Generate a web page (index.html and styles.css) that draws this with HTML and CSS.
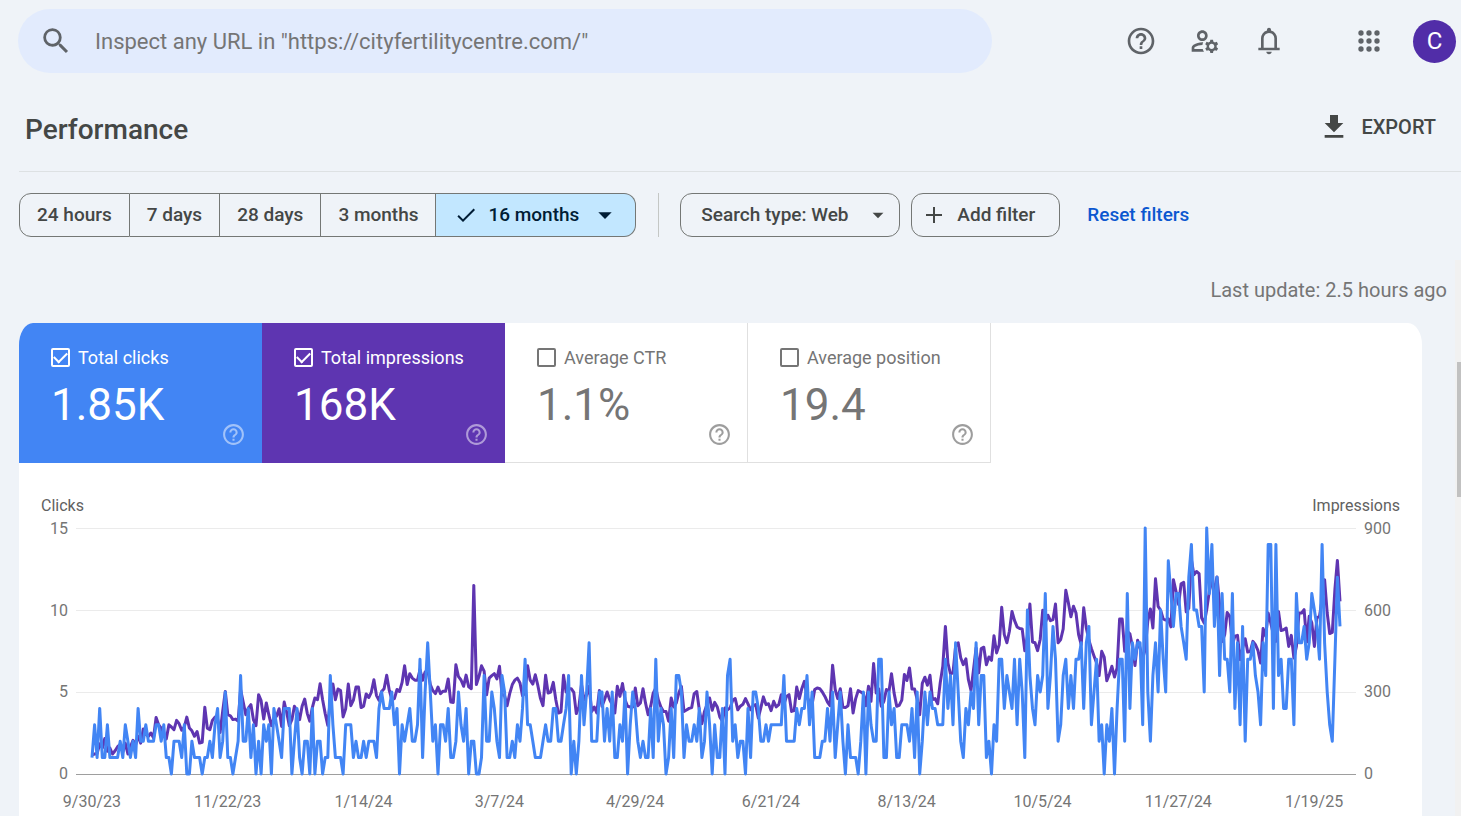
FILE: index.html
```html
<!DOCTYPE html>
<html lang="en">
<head>
<meta charset="utf-8">
<meta name="viewport" content="width=device-width, initial-scale=1">
<title>Performance</title>
<link rel="stylesheet" href="styles.css">
</head>
<body>
<svg class="sprite" aria-hidden="true">
  <symbol id="help" viewBox="0 0 24 24"><path d="M11 18h2v-2h-2v2zm1-16C6.48 2 2 6.48 2 12s4.48 10 10 10 10-4.48 10-10S17.52 2 12 2zm0 18c-4.41 0-8-3.59-8-8s3.59-8 8-8 8 3.59 8 8-3.59 8-8 8zm0-14c-2.21 0-4 1.79-4 4h2c0-1.1.9-2 2-2s2 .9 2 2c0 2-3 1.75-3 5h2c0-2.25 3-2.5 3-5 0-2.21-1.79-4-4-4z"/></symbol>
  <symbol id="caret" viewBox="0 0 24 24"><path d="M7 10l5 5 5-5z"/></symbol>
</svg>

<header class="topbar">
  <label class="search">
    <svg class="search-icon" viewBox="0 0 24 24" aria-hidden="true"><path d="M15.5 14h-.79l-.28-.27A6.471 6.471 0 0 0 16 9.5 6.5 6.5 0 1 0 9.5 16c1.61 0 3.09-.59 4.23-1.57l.27.28v.79l5 4.99L20.49 19l-4.99-5zm-6 0C7.01 14 5 11.99 5 9.5S7.01 5 9.5 5 14 7.01 14 9.5 11.99 14 9.5 14z"/></svg>
    <input class="search-input" type="text" aria-label="Inspect URL" placeholder='Inspect any URL in "https://cityfertilitycentre.com/"'>
  </label>
  <nav class="actions" aria-label="Account tools">
    <button class="icon-button" aria-label="Help"><svg viewBox="0 0 24 24"><use href="#help"/></svg></button>
    <button class="icon-button" aria-label="User settings"><svg viewBox="0 0 24 24"><path d="M4 18v-.65c0-.34.16-.66.41-.81C6.1 15.53 8.03 15 10 15c.03 0 .05 0 .08.01.1-.7.3-1.37.59-1.98-.22-.02-.44-.03-.67-.03-2.42 0-4.68.67-6.61 1.82-.88.52-1.39 1.5-1.39 2.53V20h9.26c-.42-.6-.75-1.28-.97-2H4zM10 12c2.21 0 4-1.79 4-4s-1.79-4-4-4-4 1.79-4 4 1.79 4 4 4zm0-6c1.1 0 2 .9 2 2s-.9 2-2 2-2-.9-2-2 .9-2 2-2zM20.75 16c0-.22-.03-.42-.06-.63l1.14-1.01-1-1.73-1.45.49c-.32-.27-.68-.48-1.08-.63L18 11h-2l-.3 1.49c-.4.15-.76.36-1.08.63l-1.45-.49-1 1.73 1.14 1.01c-.03.21-.06.41-.06.63s.03.42.06.63l-1.14 1.01 1 1.73 1.45-.49c.32.27.68.48 1.08.63L16 21h2l.3-1.49c.4-.15.76-.36 1.08-.63l1.45.49 1-1.73-1.14-1.01c.03-.21.06-.41.06-.63zM17 18c-1.1 0-2-.9-2-2s.9-2 2-2 2 .9 2 2-.9 2-2 2z"/></svg></button>
    <button class="icon-button" aria-label="Notifications"><svg viewBox="0 0 24 24"><path d="M4 19v-2h2v-7q0-2.075 1.25-3.688T10.5 4.2v-.7q0-.625.438-1.062T12 2t1.063.438T13.5 3.5v.7q2 .5 3.25 2.113T18 10v7h2v2zm8 3q-.825 0-1.412-.587T10 20h4q0 .825-.587 1.413T12 22m-4-5h8v-7q0-1.65-1.175-2.825T12 6 9.175 7.175 8 10z"/></svg></button>
    <button class="icon-button apps" aria-label="Apps"><svg viewBox="0 0 24 24"><circle cx="6" cy="6" r="2"/><circle cx="12" cy="6" r="2"/><circle cx="18" cy="6" r="2"/><circle cx="6" cy="12" r="2"/><circle cx="12" cy="12" r="2"/><circle cx="18" cy="12" r="2"/><circle cx="6" cy="18" r="2"/><circle cx="12" cy="18" r="2"/><circle cx="18" cy="18" r="2"/></svg></button>
    <button class="avatar" aria-label="Account">C</button>
  </nav>
</header>

<main class="page">
  <div class="title-row">
    <h1 class="title">Performance</h1>
    <button class="export"><svg class="export-icon" viewBox="0 0 24 24" aria-hidden="true"><path d="M19 9h-4V3H9v6H5l7 7 7-7zM5 18v2h14v-2H5z"/></svg>EXPORT</button>
  </div>

  <div class="filters">
    <div class="ranges" role="group" aria-label="Date range">
      <button class="range">24 hours</button>
      <button class="range">7 days</button>
      <button class="range">28 days</button>
      <button class="range">3 months</button>
      <button class="range selected" aria-pressed="true">
        <svg class="glyph" viewBox="0 0 24 24" aria-hidden="true"><path d="M9 16.17L4.83 12l-1.42 1.41L9 19 21 7l-1.41-1.41z"/></svg>
        16 months
        <svg class="caret" aria-hidden="true"><use href="#caret"/></svg>
      </button>
    </div>
    <span class="separator"></span>
    <div class="chips">
      <div class="select-chip">
        <select class="chip-select" aria-label="Search type"><option>Search type: Web</option></select>
        <svg class="select-caret" aria-hidden="true"><use href="#caret"/></svg>
      </div>
      <button class="chip"><svg class="glyph" viewBox="0 0 24 24" aria-hidden="true"><path d="M20 13h-7v7h-2v-7H4v-2h7V4h2v7h7v2z"/></svg>Add filter</button>
    </div>
    <a class="reset" href="#">Reset filters</a>
  </div>

  <p class="updated">Last update: 2.5 hours ago</p>

  <section class="card">
    <div class="metrics">
      <div class="metric clicks">
        <label class="metric-name"><input class="box" type="checkbox" checked>Total clicks</label>
        <div class="metric-value">1.85K</div>
        <svg class="metric-help" aria-hidden="true"><use href="#help"/></svg>
      </div>
      <div class="metric impressions">
        <label class="metric-name"><input class="box" type="checkbox" checked>Total impressions</label>
        <div class="metric-value">168K</div>
        <svg class="metric-help" aria-hidden="true"><use href="#help"/></svg>
      </div>
      <div class="metric">
        <label class="metric-name"><input class="box" type="checkbox">Average CTR</label>
        <div class="metric-value">1.1%</div>
        <svg class="metric-help" aria-hidden="true"><use href="#help"/></svg>
      </div>
      <div class="metric">
        <label class="metric-name"><input class="box" type="checkbox">Average position</label>
        <div class="metric-value">19.4</div>
        <svg class="metric-help" aria-hidden="true"><use href="#help"/></svg>
      </div>
    </div>

    <div class="chart">
      <div class="axis-names"><span>Clicks</span><span>Impressions</span></div>
      <div class="plot-row">
        <div class="scale left"><span>15</span><span>10</span><span>5</span><span>0</span></div>
        <svg class="plot" viewBox="0 0 1280 246" preserveAspectRatio="none" role="img" aria-label="Clicks and impressions per day">
          <path class="grid-line" d="M0 .5H1280M0 82.5H1280M0 164.5H1280"/>
          <path class="base-line" d="M0 246.5H1280"/>
          <polyline class="series impressions-line" id="impressions-line"/>
          <polyline class="series clicks-line" id="clicks-line"/>
        </svg>
        <div class="scale right"><span>900</span><span>600</span><span>300</span><span>0</span></div>
      </div>
      <div class="dates">
        <span>9/30/23</span><span>11/22/23</span><span>1/14/24</span><span>3/7/24</span><span>4/29/24</span><span>6/21/24</span><span>8/13/24</span><span>10/5/24</span><span>11/27/24</span><span>1/19/25</span>
      </div>
    </div>
  </section>
</main>
<div class="scroll-track" aria-hidden="true"><div class="scroll-thumb"></div></div>
<script src="chart.js"></script>
</body>
</html>
```

FILE: styles.css
```css
* { box-sizing: border-box; }

body {
  margin: 0;
  background: #eff3f8;
  color: #444746;
  font-family: Roboto, "Liberation Sans", sans-serif;
  font-size: 18px;
  overflow: hidden;
}

button, input, select { font: inherit; color: inherit; }
button { background: none; border: 0; padding: 0; cursor: pointer; }
svg { fill: currentColor; flex: none; }
.sprite { position: absolute; width: 0; height: 0; }

.topbar {
  display: flex;
  align-items: center;
  justify-content: space-between;
  padding: 9px 5px 0 18px;
}
.search {
  display: flex;
  align-items: center;
  gap: 22px;
  width: 68%;
  max-width: 974px;
  height: 64px;
  padding: 0 21px;
  border-radius: 32px;
  background: #e2ebfd;
}
.search-icon { width: 34px; height: 34px; color: #5f6368; }
.search-input {
  flex: 1;
  min-width: 0;
  border: 0;
  padding: 0;
  outline: 0;
  background: none;
  font-size: 22px;
}
.search-input::placeholder { color: #757575; opacity: 1; }
.actions { display: flex; align-items: center; gap: 32px; color: #5f6368; }
.icon-button { display: flex; }
.icon-button svg { width: 32px; height: 32px; }
.apps { margin-left: 36px; }
.apps + .avatar { margin-left: -4px; }
.avatar {
  width: 43px;
  height: 43px;
  border-radius: 50%;
  background: #512da8;
  color: #fff;
  font-size: 24px;
}

.page { padding: 0 39px 0 19px; }
.title-row {
  display: flex;
  align-items: center;
  justify-content: space-between;
  height: 99px;
  margin-right: -39px;
  padding: 16px 25px 0 6px;
  border-bottom: 1px solid #dde1e3;
}
.title { margin: 0; font-size: 28px; font-weight: 500; line-height: 36px; }
.export {
  display: flex;
  align-items: center;
  gap: 11px;
  height: 36px;
  margin-bottom: 6px;
  font-size: 20px;
  font-weight: 500;
}
.export-icon { width: 32px; height: 32px; }

.filters {
  display: flex;
  align-items: center;
  height: 44px;
  margin-top: 21px;
  font-size: 19px;
  font-weight: 500;
  line-height: 22px;
  white-space: nowrap;
}
.ranges, .chips { display: flex; height: 44px; }
.range {
  padding: 0 17px;
  border: 1px solid #747775;
  border-left-width: 0;
}
.range:first-child { border-left-width: 1px; border-radius: 12px 0 0 12px; }
.range:last-child { border-radius: 0 12px 12px 0; }
.selected {
  display: flex;
  align-items: center;
  gap: 10px;
  padding: 0 14px 0 18px;
  background: #c2e7ff;
  color: #001d35;
}
.glyph { width: 24px; height: 24px; }
.caret { width: 32px; height: 32px; }
.separator { width: 1px; height: 44px; margin: 0 21px 0 22px; background: #c4c7c5; }
.chips { gap: 11px; }
.select-chip { display: grid; align-items: center; }
.chip-select, .select-caret { grid-area: 1 / 1; }
.chip-select {
  appearance: none;
  height: 44px;
  padding: 0 50px 0 20px;
  border: 1px solid #747775;
  border-radius: 12px;
  background: none;
}
.select-caret { justify-self: end; width: 26px; height: 26px; margin-right: 9px; pointer-events: none; }
.chip {
  display: flex;
  align-items: center;
  gap: 11px;
  padding: 0 24px 0 10px;
  border: 1px solid #747775;
  border-radius: 12px;
}
.reset { margin-left: 27px; color: #0b57d0; text-decoration: none; }

.updated {
  margin: 39px -25px 0 0;
  color: #757575;
  font-size: 20px;
  line-height: 28px;
  text-align: right;
}

.card {
  margin-top: 19px;
  min-height: 493px;
  overflow: hidden;
  border-radius: 14px 14px 0 0 / 22px 22px 0 0;
  background: #fff;
}
.metrics { display: grid; grid-template-columns: repeat(4, 243px); }
.metric {
  display: grid;
  grid-template-rows: 20px 48px 24px;
  row-gap: 3px;
  padding: 25px 15px 15px 32px;
  border: 1px solid #e0e0e0;
  border-width: 0 1px 1px 0;
  color: #757575;
  height: 140px;
}
.clicks { background: #4285f4; border-color: #4285f4; color: #fff; }
.impressions { background: #5e35b1; border-color: #5e35b1; color: #fff; }
.metric-name { display: flex; align-items: center; gap: 8px; line-height: 20px; }
.metric-value { font-size: 44px; line-height: 68px; }
.metric-help { width: 25px; height: 25px; justify-self: end; opacity: .7; }
.clicks .metric-help, .impressions .metric-help { opacity: .5; }
.box {
  appearance: none;
  display: grid;
  place-items: center;
  width: 19px;
  height: 19px;
  margin: 0 0 1px;
  border: 2px solid currentColor;
  border-radius: 2px;
}
.box:checked::before {
  content: "";
  width: 11px;
  height: 6px;
  margin-bottom: 3px;
  border: solid currentColor;
  border-width: 0 0 2px 2px;
  transform: rotate(-45deg);
}

.chart { padding: 33px 22px 0; color: #757575; font-size: 16px; line-height: 20px; }
.axis-names { display: flex; justify-content: space-between; color: #616161; }
.plot-row { display: grid; grid-template-columns: 27px 1fr 36px; column-gap: 8px; margin-top: 3px; }
.scale { display: flex; flex-direction: column; justify-content: space-between; }
.scale.left { text-align: right; }
.plot { width: 100%; height: 246px; margin: 9px 0 10px; overflow: visible; }
.plot path, .series { fill: none; vector-effect: non-scaling-stroke; }
.grid-line { stroke: #ebebeb; }
.base-line { stroke: #9e9e9e; }
.series { stroke-width: 3px; stroke-linejoin: round; }
.impressions-line { stroke: #5e35b1; }
.clicks-line { stroke: #4285f4; }
.dates {
  display: grid;
  grid-template-columns: repeat(10, 1fr);
  margin: 8px 18px 0 -17px;
  text-align: center;
}

.scroll-track {
  position: fixed;
  top: 260px;
  right: 0;
  bottom: 0;
  width: 6px;
  padding: 102px 0 0 2px;
  background: #f1f1f1;
}
.scroll-thumb { height: 135px; background: #c1c1c1; }
```

FILE: chart.js
```js
// Daily values from 9/30/23 to 1/29/25.
const clicks = [
  1,3,1,4,1,1,3,1,1,1,1,2,1,3,2,1,2,1,4,2,2,3,2,2,2,3,3,2,3,1,
  1,0,2,2,2,1,3,0,0,2,1,1,1,0,1,1,2,1,3,4,1,2,5,1,1,0,1,2,6,2,
  2,4,1,3,0,2,0,3,2,3,0,4,3,2,1,4,4,4,0,2,4,1,0,2,2,0,4,0,2,2,
  0,1,1,6,3,1,1,1,0,3,3,3,1,2,1,1,2,1,2,2,2,1,4,5,4,4,4,5,3,4,
  0,3,2,3,4,2,2,3,7,1,5,8,5,2,3,0,3,3,2,4,1,1,2,5,3,2,4,0,2,2,
  0,0,1,6,2,2,5,4,2,1,6,5,1,1,2,1,3,2,4,7,3,3,2,1,1,1,2,3,2,2,
  4,4,2,2,3,4,6,0,2,0,2,6,3,5,8,2,2,2,5,5,2,4,2,5,1,1,3,2,5,0,
  3,5,4,2,1,2,1,1,4,1,7,2,4,3,0,1,4,1,6,6,5,1,3,2,2,3,2,4,1,2,
  5,3,0,3,1,1,4,0,6,7,2,3,1,2,2,0,4,1,5,5,4,2,2,3,2,3,3,3,3,3,
  6,2,2,2,2,4,3,4,4,6,3,5,1,1,1,2,2,4,2,5,1,3,5,2,0,3,1,1,1,0,
  2,5,0,5,3,2,2,7,7,1,1,5,3,4,1,1,3,3,3,2,4,1,5,0,2,5,3,5,4,4,
  3,3,3,7,4,6,3,8,5,2,1,4,3,5,4,8,3,6,6,1,2,0,3,2,7,7,4,6,5,4,
  7,3,7,5,1,10,6,4,3,6,5,6,11,4,6,9,7,2,3,6,7,4,6,4,7,7,8,4,8,9,
  3,5,7,2,3,0,3,2,4,0,4,7,7,2,11,4,8,7,8,8,3,15,5,2,6,8,5,10,7,5,
  13,11,9,11,11,9,8,7,12,14,10,10,9,9,5,15,11,14,9,12,6,11,7,7,5,11,4,8,3,9,
  2,7,7,8,6,5,3,8,6,14,14,4,14,6,7,4,4,7,7,3,11,8,8,9,7,8,11,10,9,7,
  14,8,5,3,2,7,12,9
];

const impressions = [
  70,73,75,110,95,130,83,95,73,85,100,108,80,113,73,100,123,108,138,113,165,145,138,150,132,207,180,168,145,128,
  180,172,162,196,184,160,172,208,168,158,138,155,113,116,244,168,162,196,208,200,152,230,302,217,213,199,201,193,308,263,
  217,241,254,199,177,290,268,201,260,217,177,205,211,239,174,263,223,177,199,248,233,199,248,274,221,193,244,278,272,330,
  272,221,178,272,329,272,311,305,209,239,329,250,270,318,318,243,248,293,280,299,345,287,270,302,312,361,306,272,276,309,
  302,335,396,327,367,351,343,343,382,343,373,382,327,305,294,318,294,303,303,348,263,262,400,356,344,321,362,319,312,690,
  327,357,396,376,290,351,360,367,348,394,290,287,250,294,327,343,351,333,287,296,396,343,329,363,323,276,250,361,296,300,
  335,272,223,227,361,300,312,312,299,221,245,327,272,290,321,229,245,223,306,248,272,300,272,254,223,321,284,331,272,248,
  245,245,315,250,260,312,260,217,248,296,315,272,245,229,229,193,278,245,260,296,321,229,234,240,243,294,302,235,184,229,
  254,278,233,262,245,209,193,242,235,242,270,276,235,248,255,276,257,235,250,254,205,242,282,254,257,232,266,245,254,290,
  254,284,290,229,232,318,276,312,339,284,260,254,309,315,312,300,284,263,250,398,309,276,312,244,243,250,312,223,276,305,
  300,294,250,321,266,404,296,312,248,266,309,303,367,296,248,251,270,364,342,388,311,311,272,217,332,354,325,361,272,276,
  257,333,394,540,406,366,370,467,480,425,400,421,345,306,382,461,370,459,464,400,428,416,506,443,473,610,510,480,522,595,
  562,538,532,531,451,504,622,483,480,451,492,599,553,581,561,565,622,480,492,531,672,626,575,614,589,510,473,608,534,489,
  459,432,406,360,449,428,341,366,394,355,388,567,567,449,522,513,467,397,489,461,424,455,559,604,534,714,613,599,567,563,
  568,538,711,668,620,696,701,593,607,784,729,741,733,571,552,601,668,705,674,721,620,485,510,591,577,473,504,507,418,461,
  495,446,449,485,473,451,406,532,504,589,552,510,485,595,525,528,534,467,507,424,467,589,589,601,483,577,553,467,571,577,
  638,711,589,514,518,675,781,632
];

const FIRST_X = 16;
const DAY_WIDTH = 1248 / 487;
const HEIGHT = 246;

function draw(id, values, max) {
  const points = values.map((value, day) =>
    `${(FIRST_X + day * DAY_WIDTH).toFixed(1)},${(HEIGHT - value / max * HEIGHT).toFixed(1)}`);
  document.getElementById(id).setAttribute("points", points.join(" "));
}

draw("impressions-line", impressions, 900);
draw("clicks-line", clicks, 15);
```
